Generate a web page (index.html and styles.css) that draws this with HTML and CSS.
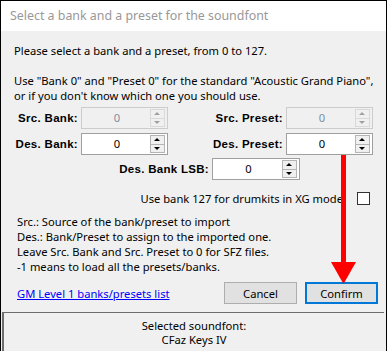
FILE: index.html
```html
<!DOCTYPE html>
<html lang="en">
<head>
    <meta charset="UTF-8">
    <title>Select a bank and a preset for the soundfont</title>
    <link rel="stylesheet" href="styles.css">
</head>
<body>
    <div class="window">
        <div class="titlebar">Select a bank and a preset for the soundfont</div>
        <div class="content">
            <p class="intro">Please select a bank and a preset, from 0 to 127.</p>
            <p class="hint">Use "Bank 0" and "Preset 0" for the standard "Acoustic Grand Piano",<br>or if you don't know which one you should use.</p>

            <div class="spin-grid">
                <label class="lbl">Src. Bank:</label>
                <div class="spinbox disabled"><span class="val">0</span><span class="spin"><i class="up"></i><i class="down"></i></span></div>
                <label class="lbl">Src. Preset:</label>
                <div class="spinbox disabled"><span class="val">0</span><span class="spin"><i class="up"></i><i class="down"></i></span></div>

                <label class="lbl">Des. Bank:</label>
                <div class="spinbox"><span class="val">0</span><span class="spin"><i class="up"></i><i class="down"></i></span></div>
                <label class="lbl">Des. Preset:</label>
                <div class="spinbox"><span class="val">0</span><span class="spin"><i class="up"></i><i class="down"></i></span></div>
            </div>

            <div class="lsb-row">
                <label class="lbl">Des. Bank LSB:</label>
                <div class="spinbox"><span class="val">0</span><span class="spin"><i class="up"></i><i class="down"></i></span></div>
            </div>

            <div class="check-row">
                <span>Use bank 127 for drumkits in XG mode</span>
                <span class="checkbox"></span>
            </div>

            <p class="notes">Src.: Source of the bank/preset to import<br>Des.: Bank/Preset to assign to the imported one.<br>Leave Src. Bank and Src. Preset to 0 for SFZ files.<br>-1 means to load all the presets/banks.</p>

            <div class="actions">
                <a href="#" class="link">GM Level 1 banks/presets list</a>
                <div class="buttons">
                    <button class="btn">Cancel</button>
                    <button class="btn default">Confirm</button>
                </div>
            </div>
        </div>
        <div class="status">
            <div>Selected soundfont:</div>
            <div>CFaz Keys IV</div>
        </div>

        <!-- red pointer arrow drawn over the dialog -->
        <svg class="arrow" width="387" height="351" viewBox="0 0 387 351">
            <rect x="341" y="155" width="5" height="108" fill="#ff0000"/>
            <polygon points="331,262 356,262 343.5,284" fill="#ff0000"/>
        </svg>
    </div>
</body>
</html>
```

FILE: styles.css
```css
body {
    margin: 0;
    font-family: "Noto Sans", "Open Sans", sans-serif;
    font-size: 11.2px;
    color: #000;
    background: #f0f0f0;
}
.window {
    position: relative;
    width: 385px;
    height: 350px;
    border: 1px solid #000;
    border-bottom: none;
    background: #f0f0f0;
    overflow: hidden;
}
.titlebar {
    height: 30px;
    line-height: 30px;
    padding-left: 9px;
    background: #fff;
    color: #999;
    font-size: 12.4px;
}
.content {
    padding: 12px 13px 0 13px;
}
p {
    margin: 0;
    line-height: 15px;
    white-space: nowrap;
}
.hint {
    margin-top: 15px;
}
.lbl {
    font-family: "Liberation Sans", Arial, sans-serif;
    font-weight: bold;
    font-size: 11.5px;
    letter-spacing: 0.3px;
    text-align: right;
    white-space: nowrap;
}
.spin-grid {
    display: grid;
    grid-template-columns: 64px 87px 1fr 87px;
    column-gap: 3px;
    row-gap: 4px;
    align-items: center;
    margin-top: 4px;
}
.spinbox {
    display: flex;
    height: 20px;
    border: 1px solid #a0a0a0;
    background: #fff;
    box-sizing: content-box;
}
.spinbox .val {
    flex: 1;
    text-align: center;
    line-height: 20px;
    padding-left: 2px;
}
.spinbox.disabled {
    background: #f0f0f0;
    border-color: #cccccc;
}
.spinbox.disabled .val {
    color: #7d8ea3;
}
.spin {
    display: flex;
    flex-direction: column;
    width: 13px;
    margin: 1px 2px 1px 0;
    border: 1px solid #b4b4b4;
    background: #f0f0f0;
}
.spin i {
    flex: 1;
    position: relative;
}
.spin i.up {
    border-bottom: 1px solid #b4b4b4;
}
.spin i::after {
    content: "";
    position: absolute;
    left: 3px;
    top: 2px;
    border-left: 3px solid transparent;
    border-right: 3px solid transparent;
}
.spin i.up::after {
    border-bottom: 3px solid #000;
}
.spin i.down::after {
    border-top: 3px solid #000;
}
.disabled .spin {
    border-color: #d9d9d9;
}
.disabled .spin i.up {
    border-bottom-color: #d9d9d9;
}
.disabled .spin i.up::after {
    border-bottom-color: #a0a0a0;
}
.disabled .spin i.down::after {
    border-top-color: #a0a0a0;
}
.lsb-row {
    display: flex;
    justify-content: flex-end;
    align-items: center;
    gap: 3px;
    margin: 3px 73px 0 0;
}
.lsb-row .spinbox {
    width: 86px;
}
.check-row {
    display: flex;
    justify-content: flex-end;
    align-items: center;
    gap: 14px;
    margin: 11px 3px 0 0;
    height: 15px;
    white-space: nowrap;
}
.checkbox {
    width: 11px;
    height: 11px;
    border: 1px solid #333;
    background: #fff;
}
.notes {
    margin: 8px 0 0 3px;
}
.actions {
    display: flex;
    justify-content: space-between;
    align-items: center;
    margin: 8px -5px 0 3px;
}
.link {
    color: #0000ff;
    text-decoration: underline;
}
.buttons {
    display: flex;
    gap: 8px;
}
.btn {
    width: 73px;
    height: 22px;
    font-family: "Noto Sans", "Open Sans", sans-serif;
    font-size: 11.2px;
    background: #e1e1e1;
    border: 1px solid #adadad;
    padding: 0;
    color: #000;
}
.btn.default {
    border: 2px solid #0078d7;
}
.status {
    margin: 8px 2px 0 1px;
    height: 60px;
    border-top: 1px solid #6d6d6d;
    border-left: 2px solid #6d6d6d;
    text-align: center;
    line-height: 14px;
    padding-top: 6px;
}
.arrow {
    position: absolute;
    left: -1px;
    top: -1px;
    pointer-events: none;
}
```
